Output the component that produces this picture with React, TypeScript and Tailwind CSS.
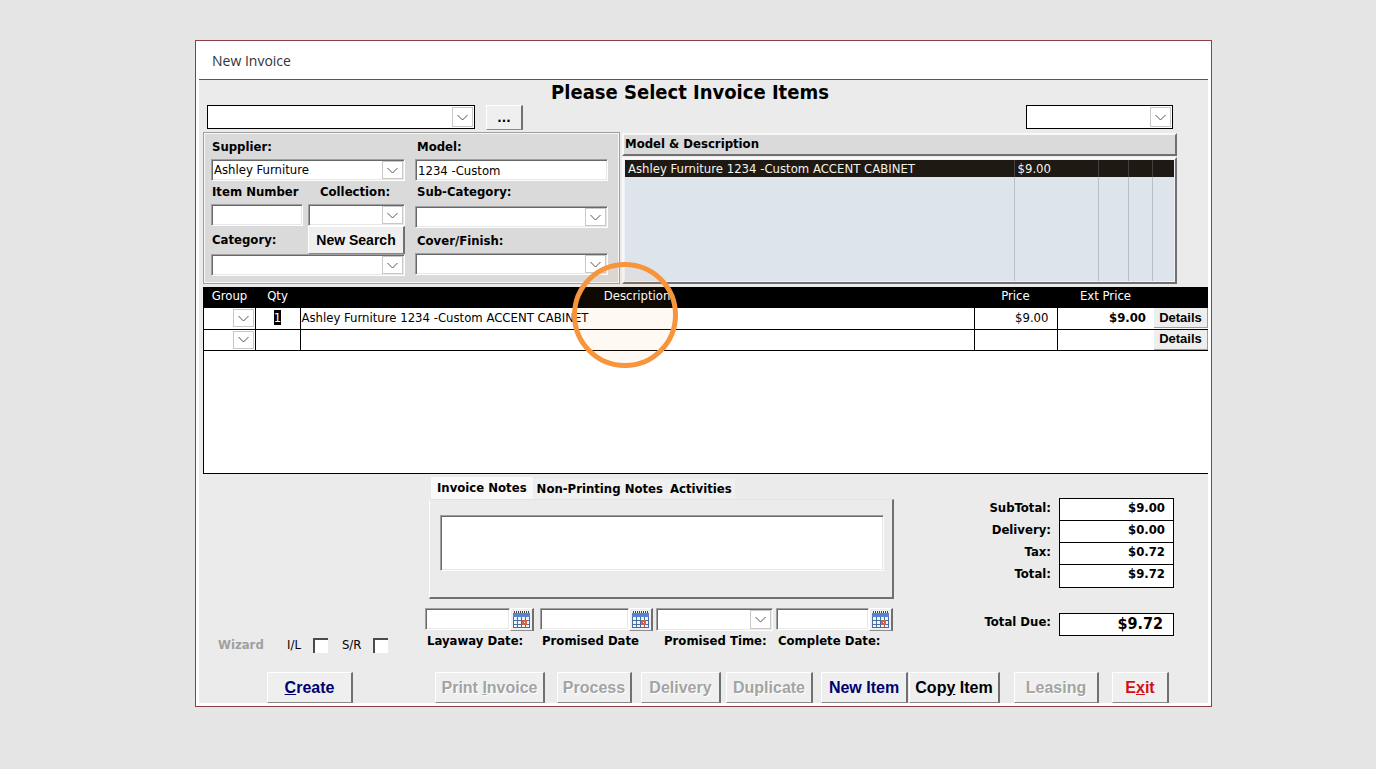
import { useState } from 'react';
import type { ReactNode } from 'react';
import clsx from 'clsx';

const SUNKEN = 'border border-t-[#a0a0a0] border-l-[#a0a0a0] border-r-white border-b-white shadow-[inset_1px_1px_0_#696969,inset_-1px_-1px_0_#e8e8e8]';
const RAISED = 'border border-r-2 border-t-white border-l-white border-r-[#707070] border-b-[#8a8a8a] bg-[#efefef]';

interface ComboProps {
  id: string;
  label?: string;
  value?: string;
  frame?: string;
  className?: string;
}

function Combo({ id, label, value = '', frame = SUNKEN, className }: ComboProps) {
  return (
    <div className={clsx('relative flex bg-white', frame, className)}>
      <select
        id={id}
        aria-label={label}
        defaultValue={value}
        className="w-full min-w-0 appearance-none bg-transparent pr-5 pl-0.5 text-[13px] leading-4 text-black outline-none"
      >
        <option value={value}>{value}</option>
      </select>
      <span className="pointer-events-none absolute inset-y-px right-px flex w-[21px] items-center justify-center border border-[#c8c8c8] bg-white">
        <svg width="11" height="7" viewBox="0 0 11 7" fill="none" stroke="#555" strokeWidth="1">
          <path d="M0.5 1 L5.5 6 L10.5 1" />
        </svg>
      </span>
    </div>
  );
}

interface FieldProps {
  id: string;
  value?: string;
  className?: string;
}

function TextField({ id, value = '', className }: FieldProps) {
  return (
    <input
      id={id}
      type="text"
      defaultValue={value}
      className={clsx('block h-[22px] min-w-0 bg-white pl-0.5 text-[13px] leading-4 text-black outline-none', SUNKEN, className)}
    />
  );
}

function Label({ htmlFor, className, children }: { htmlFor: string; className?: string; children: ReactNode }) {
  return (
    <label htmlFor={htmlFor} className={clsx('block h-5 text-[13px] leading-5 font-bold whitespace-nowrap', className)}>
      {children}
    </label>
  );
}

function CalendarIcon() {
  return (
    <svg width="17" height="17" viewBox="0 0 17 17" shapeRendering="crispEdges">
      <rect x="0" y="2" width="17" height="15" fill="#4a6c9c" />
      <rect x="0" y="2" width="17" height="4" fill="#5585d0" />
      <path d="M1 1h1M3 1h1M5 1h1M7 1h1M9 1h1M11 1h1M13 1h1M15 1h1" stroke="#444" strokeWidth="2" />
      <path d="M1 6h3v3h-3zM5 6h3v3h-3zM9 6h3v3h-3zM13 6h3v3h-3zM1 10h3v3h-3zM5 10h3v3h-3zM13 10h3v3h-3zM1 14h3v2h-3zM5 14h3v2h-3zM9 14h3v2h-3zM13 14h3v2h-3z" fill="#eef4fc" />
      <rect x="9" y="9" width="5" height="5" fill="#d9603f" />
      <rect x="11" y="11" width="1" height="1" fill="#fff" />
    </svg>
  );
}

function DateField({ id, label, className }: { id: string; label: string; className: string }) {
  return (
    <div className={className}>
      <div className="flex">
        <TextField id={id} className="flex-1" />
        <button
          type="button"
          aria-label={`Pick ${label}`}
          className={clsx('flex h-[23px] w-6 shrink-0 items-center justify-center', RAISED)}
        >
          <CalendarIcon />
        </button>
      </div>
      <Label htmlFor={id} className="pl-0.5">{label}</Label>
    </div>
  );
}

function SearchPanel() {
  return (
    <section className="flex w-[417px] shrink-0 gap-2.5 border-2 border-[#f6f6f6] bg-[#dadada] pt-[3px] pr-2.5 pb-1.5 pl-1.5 outline outline-1 -outline-offset-1 outline-[#a0a0a0]">
      <div className="flex w-[194px] flex-col">
        <Label htmlFor="supplier" className="pl-px">Supplier:</Label>
        <Combo id="supplier" value="Ashley Furniture" className="mt-0.5 h-[22px]" />
        <div className="mt-px flex gap-[5px]">
          <div className="w-[92px]">
            <Label htmlFor="item-number" className="pl-px">Item Number</Label>
            <TextField id="item-number" className="mt-0.5 w-full" />
          </div>
          <div className="flex-1">
            <Label htmlFor="collection" className="pl-3">Collection:</Label>
            <Combo id="collection" className="mt-0.5 h-[22px]" />
          </div>
        </div>
        <div className="flex h-7 items-center justify-between">
          <Label htmlFor="category" className="pl-px">Category:</Label>
          <button type="button" className={clsx('h-7 w-[97px] font-[Liberation_Sans,sans-serif] text-sm font-bold', RAISED)}>
            New Search
          </button>
        </div>
        <Combo id="category" className="h-[22px]" />
      </div>
      <div className="flex flex-1 flex-col">
        <Label htmlFor="model" className="pl-0.5">Model:</Label>
        <TextField id="model" value="1234 -Custom" className="mt-0.5" />
        <Label htmlFor="sub-category" className="mt-px pl-0.5">Sub-Category:</Label>
        <Combo id="sub-category" className="mt-1 h-[22px]" />
        <Label htmlFor="cover" className="mt-[3px] pl-0.5">Cover/Finish:</Label>
        <Combo id="cover" className="mt-0.5 h-[22px]" />
      </div>
    </section>
  );
}

function ModelList() {
  return (
    <section className="flex min-w-0 flex-1 flex-col gap-px pt-px">
      <h2 className="h-[23px] border-2 border-t-[#f8f8f8] border-r-[#707070] border-b-[#707070] border-l-[#f8f8f8] bg-[#dadada] pl-px text-[13px] leading-[18px] font-bold">
        Model &amp; Description
      </h2>
      <div className="flex flex-1 border-2 border-t-[#f8f8f8] border-r-[#707070] border-b-[#707070] border-l-[#f8f8f8] bg-[#f0f2f5] p-px">
        <table className="w-full table-fixed border-collapse bg-[#dee4eb] text-[13px]">
          <colgroup>
            <col />
            <col className="w-[84px]" />
            <col className="w-[30px]" />
            <col className="w-6" />
            <col className="w-[22px]" />
          </colgroup>
          <tbody className="[&_td+td]:border-l">
            <tr className="h-[17px] bg-[#1f1913] leading-4 text-[#f3f3ea] [&_td]:border-[#45413c]">
              <td className="truncate pl-[3px]">Ashley Furniture 1234 -Custom ACCENT CABINET</td>
              <td className="pl-[3px]">$9.00</td>
              <td />
              <td />
              <td />
            </tr>
            <tr className="[&_td]:border-[#b9bfc6]">
              <td />
              <td />
              <td />
              <td />
              <td />
            </tr>
          </tbody>
        </table>
      </div>
    </section>
  );
}

const lines = [
  { qty: '1', description: 'Ashley Furniture 1234 -Custom ACCENT CABINET', price: '$9.00', ext: '$9.00' },
  { qty: '', description: '', price: '', ext: '' },
];

function InvoiceLines() {
  return (
    <section className="relative mt-[3px] ml-1 h-[187px] border-b border-l border-black bg-white">
      <table className="w-full table-fixed border-collapse text-[13px] leading-4">
        <colgroup>
          <col className="w-[51px]" />
          <col className="w-[45px]" />
          <col />
          <col className="w-[83px]" />
          <col className="w-[97px]" />
          <col className="w-[54px]" />
        </colgroup>
        <thead>
          <tr className="h-[21px] bg-black text-white [&_th]:p-0 [&_th]:pb-[3px] [&_th]:font-normal">
            <th>Group</th>
            <th>Qty</th>
            <th>Description</th>
            <th>Price</th>
            <th>Ext Price</th>
            <th />
          </tr>
        </thead>
        <tbody>
          {lines.map((line, i) => (
            <tr key={i} className="h-[21px] border-b border-black [&_td]:p-0">
              <td className="border-r border-black">
                <Combo id={`group-${i}`} label="Group" frame="border-0" className="h-5" />
              </td>
              <td className="border-r border-black text-center">
                <span className="bg-black text-white">{line.qty}</span>
              </td>
              <td className="border-r border-black">
                <span className="pl-px">{line.description}</span>
              </td>
              <td className="border-r border-black text-right">
                <span className="pr-2">{line.price}</span>
              </td>
              <td className="text-right font-bold">
                <span className="pr-2">{line.ext}</span>
              </td>
              <td>
                <button
                  type="button"
                  className="block h-5 w-full border-r border-b border-[#a0a0a0] bg-[#eeeeee] font-[Liberation_Sans,sans-serif] text-[13px] leading-4 font-bold"
                >
                  Details
                </button>
              </td>
            </tr>
          ))}
        </tbody>
      </table>
      {/* click highlight */}
      <span className="pointer-events-none absolute -top-[25px] left-[368px] size-[106px] rounded-full border-[5px] border-[#f7953d] bg-[#f7953d]/6" />
    </section>
  );
}

const tabs = ['Invoice Notes', 'Non-Printing Notes', 'Activities'];

function Notes() {
  const [active, setActive] = useState(0);
  return (
    <div className="mr-px ml-1">
      <div role="tablist" className="flex h-[22px] items-end gap-px pl-0.5">
        {tabs.map((tab, i) => (
          <button
            key={tab}
            type="button"
            role="tab"
            aria-selected={i === active}
            onClick={() => setActive(i)}
            className={clsx(
              'text-[13px] font-bold whitespace-nowrap',
              i === active ? 'h-[22px] bg-[#f9f9f9] px-1.5' : 'h-5 bg-[#f0f0f0] px-[3px]',
            )}
          >
            {tab}
          </button>
        ))}
      </div>
      <div className="h-[100px] border border-t-[#e2e2e2] border-r-2 border-r-[#707070] border-b-2 border-b-[#707070] border-l-white pt-[15px] pr-2 pl-2.5">
        <textarea aria-label={tabs[active]} className={clsx('block h-14 w-full resize-none bg-white text-[13px] outline-none', SUNKEN)} />
      </div>
    </div>
  );
}

const totals = [
  ['SubTotal:', '$9.00'],
  ['Delivery:', '$0.00'],
  ['Tax:', '$0.72'],
  ['Total:', '$9.72'],
];

function Totals() {
  return (
    <div className="pt-[21px] pr-[34px] font-bold">
      <dl className="text-[13px]">
        {totals.map(([name, amount], i) => (
          <div key={name} className="flex justify-end gap-2">
            <dt className="leading-5">{name}</dt>
            <dd
              className={clsx(
                'w-[115px] border-x border-t border-black bg-white pr-2 text-right leading-[18px]',
                i === totals.length - 1 ? 'h-6 border-b' : 'h-[22px]',
              )}
            >
              {amount}
            </dd>
          </div>
        ))}
        <div className="mt-[25px] flex justify-end gap-2">
          <dt className="leading-[18px]">Total Due:</dt>
          <dd className="h-[23px] w-[115px] border border-black bg-white pr-2.5 text-right text-base leading-5">$9.72</dd>
        </div>
      </dl>
    </div>
  );
}

function Check({ id, label }: { id: string; label: string }) {
  return (
    <div className="flex items-center gap-3">
      <label htmlFor={id} className="text-[13px] leading-4">{label}</label>
      <input
        id={id}
        type="checkbox"
        className="size-[15px] appearance-none border-t-2 border-l-2 border-[#4a4a4a] bg-white checked:bg-[#000080]"
      />
    </div>
  );
}

const actions: { key: string; text: ReactNode; className: string; disabled?: boolean }[] = [
  { key: 'create', text: <><u>C</u>reate</>, className: 'w-[86px] ml-[68px] mr-auto text-[#000070]' },
  { key: 'print', text: <>Print <u>I</u>nvoice</>, className: 'w-[110px]', disabled: true },
  { key: 'process', text: 'Process', className: 'ml-3 w-[75px]', disabled: true },
  { key: 'delivery', text: 'Delivery', className: 'ml-[9px] w-20', disabled: true },
  { key: 'duplicate', text: 'Duplicate', className: 'ml-[5px] w-[87px]', disabled: true },
  { key: 'new-item', text: 'New Item', className: 'ml-2 w-[87px] text-[#000070]' },
  { key: 'copy-item', text: <>Cop<u>y</u> Item</>, className: 'ml-px w-[91px] text-black' },
  { key: 'leasing', text: 'Leasing', className: 'ml-3.5 w-[85px]', disabled: true },
  { key: 'exit', text: <>E<u>x</u>it</>, className: 'ml-[13px] mr-[39px] w-[57px] text-[#d40f14]' },
];

export default function App() {
  return (
    <main className="min-h-screen bg-[#e5e5e5] pt-10 pr-[164px] pb-10 pl-[195px] font-[DejaVu_Sans_Condensed,DejaVu_Sans,sans-serif] text-black">
      <div className="border border-[#8a3f4b] bg-white px-[3px] pb-[3px]">
        <header className="flex h-[39px] items-center border-b border-[#8a3f4b] pt-0.5 pl-[13px] font-[Open_Sans,sans-serif] text-sm text-[#333]">
          New Invoice
        </header>
        <div className="bg-[#ebebeb]">
          <div className="pr-[31px] pl-1">
            <h1 className="h-6 text-center text-xl leading-6 font-bold">Please Select Invoice Items</h1>
            <div className="mt-px flex h-[25px] items-start pr-1 pl-1">
              <Combo id="customer" label="Customer" frame="border border-black" className="h-6 w-[268px]" />
              <button type="button" aria-label="Browse" className={clsx('ml-[11px] h-[25px] w-[37px] text-[13px] font-bold', RAISED)}>
                ...
              </button>
              <Combo id="location" label="Location" frame="border border-black" className="ml-auto h-6 w-[147px]" />
            </div>
            <div className="mt-0.5 flex gap-0.5">
              <SearchPanel />
              <ModelList />
            </div>
          </div>

          <InvoiceLines />

          <div className="mt-[3px] flex items-start">
            <div className="flex w-[226px] shrink-0 items-center self-end pl-[19px]">
              <span className="w-[69px] text-[13px] leading-4 font-bold text-[#a0a0a0]">Wizard</span>
              <div className="flex gap-3.5">
                <Check id="il" label="I/L" />
                <Check id="sr" label="S/R" />
              </div>
            </div>
            <div className="min-w-[470px] shrink-0 pb-0.5">
              <Notes />
              <div className="mt-[9px] flex">
                <DateField id="layaway" label="Layaway Date:" className="w-[109px]" />
                <DateField id="promised" label="Promised Date" className="ml-1.5 w-[113px]" />
                <div className="ml-[3px] w-[117px]">
                  <Combo id="promised-time" className="h-[23px]" />
                  <Label htmlFor="promised-time" className="pl-2">Promised Time:</Label>
                </div>
                <DateField id="complete" label="Complete Date:" className="ml-[3px] w-[117px]" />
              </div>
            </div>
            <div className="flex-1">
              <Totals />
            </div>
          </div>

          <footer className="mt-[19px] flex font-[Liberation_Sans,sans-serif]">
            {actions.map((action) => (
              <button
                key={action.key}
                type="button"
                disabled={action.disabled}
                className={clsx(
                  'h-[31px] text-base font-bold whitespace-nowrap disabled:text-[#a3a3a3] disabled:[text-shadow:1px_1px_0_#fff]',
                  RAISED,
                  action.className,
                )}
              >
                {action.text}
              </button>
            ))}
          </footer>
        </div>
      </div>
    </main>
  );
}
